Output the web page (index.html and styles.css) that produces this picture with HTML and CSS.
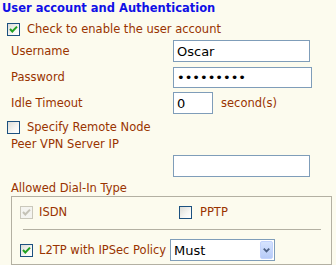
FILE: index.html
```html
<!DOCTYPE html>
<html lang="en">
<head>
    <meta charset="UTF-8">
    <meta name="viewport" content="width=device-width, initial-scale=1.0">
    <title>User account and Authentication</title>
    <link rel="stylesheet" href="styles.css">
</head>
<body>
    <div class="panel">
        <h3 class="title">User account and Authentication</h3>

        <label class="check-row enable">
            <span class="cb"><svg viewBox="0 0 11 11"><polyline points="2,5 4.3,7.5 9,2.6"/></svg></span>
            Check to enable the user account
        </label>

        <div class="fields">
            <span class="label">Username</span>
            <input class="text wide" type="text" value="Oscar">
            <span class="label">Password</span>
            <input class="text wide pass" type="password" value="123456789">
            <span class="label">Idle Timeout</span>
            <span class="timeout">
                <input class="text short" type="text" value="0">
                <span class="unit">second(s)</span>
            </span>
        </div>

        <label class="check-row remote">
            <span class="cb"></span>
            Specify Remote Node
        </label>

        <div class="label peer-label">Peer VPN Server IP</div>
        <input class="text wide peer" type="text" value="">

        <div class="label dial-label">Allowed Dial-In Type</div>
        <div class="dial-box">
            <div class="dial-row">
                <label class="opt isdn">
                    <span class="cb disabled"><svg viewBox="0 0 11 11"><polyline points="2,5 4.3,7.5 9,2.6"/></svg></span>
                    ISDN
                </label>
                <label class="opt pptp">
                    <span class="cb"></span>
                    PPTP
                </label>
            </div>
            <hr class="sep">
            <div class="dial-row l2tp-row">
                <label class="opt l2tp">
                    <span class="cb"><svg viewBox="0 0 11 11"><polyline points="2,5 4.3,7.5 9,2.6"/></svg></span>
                    L2TP with IPSec Policy
                </label>
                <div class="select">
                    <span class="select-value">Must</span>
                    <span class="select-btn"><svg viewBox="0 0 12 17"><polyline points="3,7 6,10 9,7"/></svg></span>
                </div>
            </div>
        </div>
    </div>
</body>
</html>
```

FILE: styles.css
```css
body {
    margin: 0;
    font-family: "DejaVu Sans", Verdana, sans-serif;
    font-size: 11.5px;
    color: #993300;
    background-color: #fcfbee;
}

.panel {
    width: 336px;
    height: 265px;
    overflow: hidden;
}

.title {
    margin: 0;
    padding-left: 2px;
    font-size: 11.5px;
    line-height: 16px;
    font-weight: bold;
    color: #1010e6;
}

.check-row {
    display: flex;
    align-items: center;
    gap: 7px;
    padding-left: 7px;
    height: 14px;
    line-height: 14px;
}

.enable {
    margin-top: 6px;
}

.remote {
    margin-top: 6px;
}

/* xp style checkbox */
.cb {
    box-sizing: border-box;
    width: 13px;
    height: 13px;
    flex: none;
    border: 1px solid #1c5180;
    background: linear-gradient(135deg, #dcdcd7 0%, #f6f6f3 60%, #ffffff 100%);
    display: inline-flex;
}

.cb svg {
    width: 11px;
    height: 11px;
}

.cb polyline {
    fill: none;
    stroke: #21a121;
    stroke-width: 2;
}

.cb.disabled {
    border-color: #cac8bb;
    background: #f4f4f0;
}

.cb.disabled polyline {
    stroke: #c4c2b6;
}

.fields {
    display: grid;
    grid-template-columns: 162px auto;
    grid-auto-rows: 22px;
    row-gap: 4px;
    align-items: center;
    padding-left: 11px;
    margin-top: 4px;
}

.label {
    line-height: 16px;
}

.text {
    box-sizing: border-box;
    height: 22px;
    margin: 0;
    padding: 0 3px;
    border: 1px solid #7f9db9;
    background: #fff;
    font-family: "DejaVu Sans", Verdana, sans-serif;
    font-size: 13px;
    color: #000;
    outline: none;
}

.wide {
    width: 137px;
}

.pass {
    width: 139px;
    height: 21px;
}

.short {
    width: 40px;
}

.timeout {
    display: flex;
    align-items: center;
    gap: 8px;
}

.peer-label {
    padding-left: 11px;
    margin-top: 2px;
}

.peer {
    display: block;
    margin: 3px 0 0 173px;
}

.dial-label {
    padding-left: 11px;
    margin-top: 3px;
}

.dial-box {
    box-sizing: border-box;
    width: 321px;
    margin-left: 11px;
    padding: 8px 10px 3px 8px;
    border: 1px solid #b3b0a2;
}

.dial-row {
    display: flex;
    align-items: center;
}

.opt {
    display: flex;
    align-items: center;
    gap: 6px;
    line-height: 14px;
}

.isdn {
    width: 159px;
}

.pptp {
    gap: 8px;
}

.sep {
    margin: 10px 0 9px 3px;
    border: none;
    border-top: 1px solid #b3b0a2;
    height: 0;
}

.l2tp {
    width: 150px;
}

.select {
    box-sizing: border-box;
    width: 105px;
    height: 22px;
    border: 1px solid #7f9db9;
    background: #fff;
    display: flex;
    align-items: center;
    justify-content: space-between;
    padding: 1px;
}

.select-value {
    padding-left: 2px;
    font-size: 13px;
    color: #000;
}

.select-btn {
    box-sizing: border-box;
    width: 13px;
    height: 18px;
    border: 1px solid #c3d3fd;
    border-radius: 2px;
    background: linear-gradient(#d6e3fe, #b7cbf8);
    display: flex;
}

.select-btn svg {
    width: 11px;
    height: 16px;
}

.select-btn polyline {
    fill: none;
    stroke: #4d6185;
    stroke-width: 2;
}
```
